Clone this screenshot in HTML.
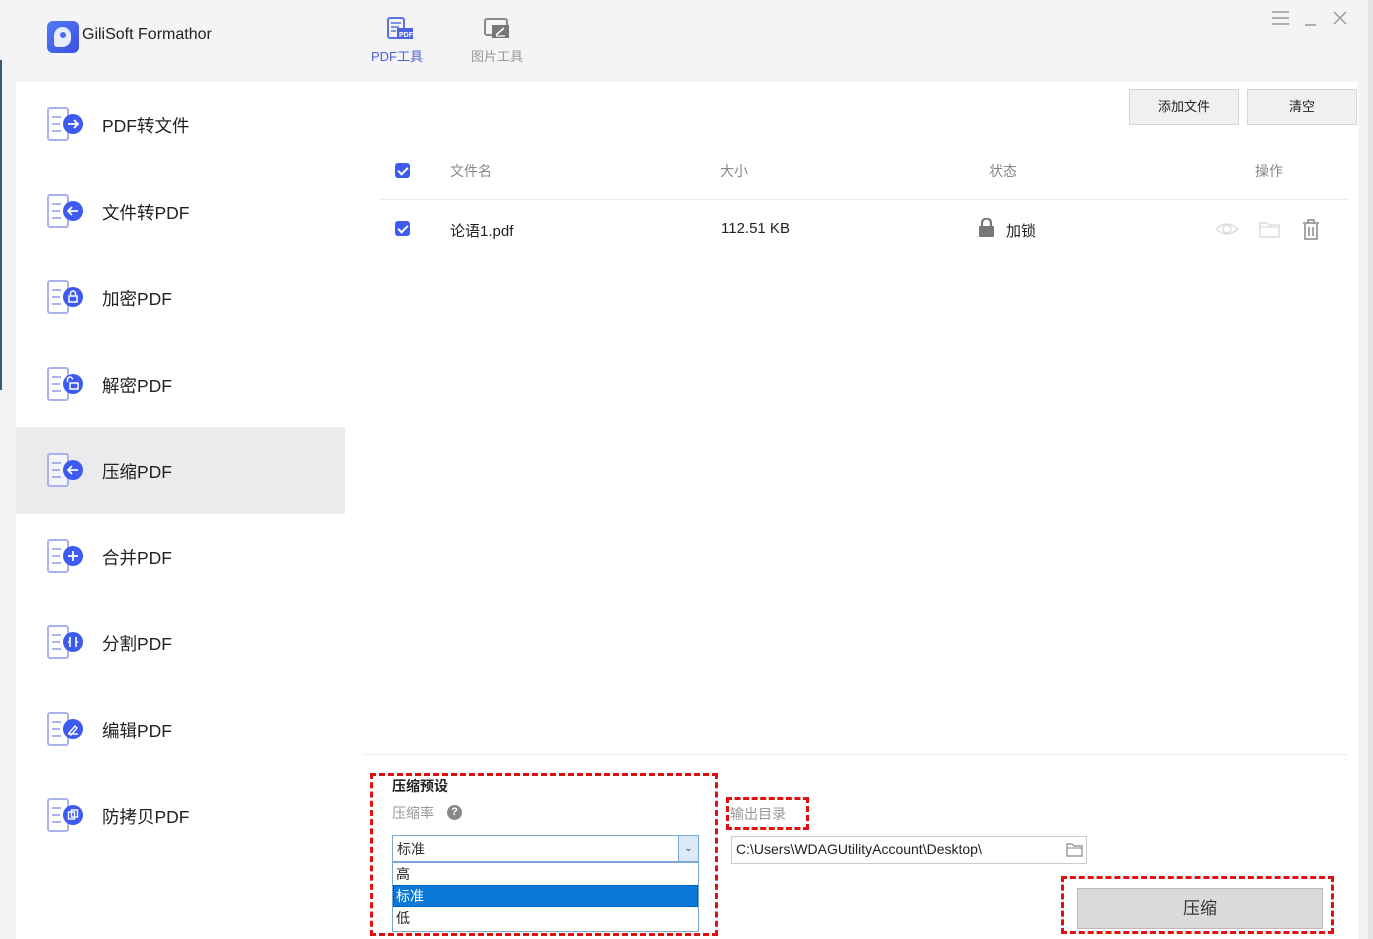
<!DOCTYPE html>
<html><head><meta charset="utf-8"><style>
*{margin:0;padding:0;box-sizing:border-box}
body{width:1373px;height:939px;overflow:hidden;background:#f4f4f6;font-family:"Liberation Sans","Noto Sans CJK SC",sans-serif;position:relative;color:#222}
.a{position:absolute}
.side{left:16px;top:82px;width:1342px;height:857px;background:#fff}
.item{position:absolute;left:16px;width:329px;height:87px}
.item svg{position:absolute;left:31px;top:26px}
.item span{position:absolute;left:86px;top:32px;font-size:17.5px;color:#222}
.hdr{font-size:14px;color:#888}
.cb{width:15px;height:15px;background:#3d5af1;border-radius:3px}
.cb:after{content:"";position:absolute;left:5px;top:2px;width:4px;height:8px;border:solid #fff;border-width:0 2px 2px 0;transform:rotate(45deg)}
.btn{background:#f0f0f0;border:1px solid #d6d6d6;font-size:13px;text-align:center;line-height:34px}
.dash{border:3px dashed #e01010}
</style></head><body>
<div class="a" style="left:0;top:60px;width:2px;height:330px;background:#3a5a7a"></div>
<div class="a" style="left:47px;top:21px;width:32px;height:32px;border-radius:6px;background:linear-gradient(135deg,#4f7cf5,#3d4fe0)"></div>
<div class="a" style="left:54px;top:27px;width:17px;height:20px;border-radius:9px 9px 9px 3px;background:#e8eefc"></div>
<div class="a" style="left:60px;top:32px;width:6px;height:6px;border-radius:50%;background:#4a6cf0"></div>
<div class="a" style="left:82px;top:26px;font-size:16px;color:#222">GiliSoft Formathor</div>
<svg class="a" style="left:386px;top:17px" width="28" height="24"><rect x="2" y="1" width="16" height="20" rx="2" fill="none" stroke="#5a73e8" stroke-width="2"/><path d="M5 6h10M5 10h8M5 14h5" stroke="#5a73e8" stroke-width="1.5"/><rect x="11" y="11" width="16" height="11" fill="#4a62e6"/><text x="13" y="20" font-size="7" fill="#fff" font-family="Liberation Sans" font-weight="bold">PDF</text></svg>
<div class="a" style="left:371px;top:46px;font-size:13px;color:#4a62d8">PDF工具</div>
<svg class="a" style="left:484px;top:17px" width="28" height="24"><rect x="1" y="2" width="22" height="16" rx="2" fill="none" stroke="#888" stroke-width="2"/><rect x="8" y="8" width="17" height="13" fill="#777"/><path d="M12 18l8-7" stroke="#fff" stroke-width="1.5"/><path d="M12 19h9" stroke="#fff" stroke-width="1.2"/></svg>
<div class="a" style="left:471px;top:46px;font-size:13px;color:#999">图片工具</div>
<svg class="a" style="left:1270px;top:9px" width="80" height="20"><path d="M2 3h17M2 9h17M2 15h17" stroke="#999" stroke-width="1.5"/><path d="M35 16h11" stroke="#999" stroke-width="1.5"/><path d="M64 3l12 12M76 3L64 15" stroke="#999" stroke-width="1.5"/></svg>
<div class="a side"></div>
<div class="a" style="left:16px;top:427px;width:329px;height:87px;background:#ebebee"></div>
<div class="a" style="left:1368px;top:0;width:5px;height:939px;background:#e4e4e6"></div>
<div class="item" style="top:81px"><svg width="40" height="36"><rect x="1" y="1" width="20" height="32" rx="2" fill="#fff" stroke="#a9b1ef" stroke-width="2"/><path d="M5 10h9M5 17h8M5 24h9" stroke="#8d97e8" stroke-width="1.5"/><circle cx="26" cy="17" r="10" fill="#3d5af1"/><path d="M21 17h10M27 13l4 4-4 4" stroke="#fff" stroke-width="1.8" fill="none"/></svg><span>PDF转文件</span></div>
<div class="item" style="top:168px"><svg width="40" height="36"><rect x="1" y="1" width="20" height="32" rx="2" fill="#fff" stroke="#a9b1ef" stroke-width="2"/><path d="M5 10h9M5 17h8M5 24h9" stroke="#8d97e8" stroke-width="1.5"/><circle cx="26" cy="17" r="10" fill="#3d5af1"/><path d="M21 17h10M25 13l-4 4 4 4" stroke="#fff" stroke-width="1.8" fill="none"/></svg><span>文件转PDF</span></div>
<div class="item" style="top:254px"><svg width="40" height="36"><rect x="1" y="1" width="20" height="32" rx="2" fill="#fff" stroke="#a9b1ef" stroke-width="2"/><path d="M5 10h9M5 17h8M5 24h9" stroke="#8d97e8" stroke-width="1.5"/><circle cx="26" cy="17" r="10" fill="#3d5af1"/><rect x="22" y="16" width="8" height="6" fill="none" stroke="#fff" stroke-width="1.5"/><path d="M23.5 16v-2.5a2.5 2.5 0 0 1 5 0V16" stroke="#fff" stroke-width="1.5" fill="none"/></svg><span>加密PDF</span></div>
<div class="item" style="top:341px"><svg width="40" height="36"><rect x="1" y="1" width="20" height="32" rx="2" fill="#fff" stroke="#a9b1ef" stroke-width="2"/><path d="M5 10h9M5 17h8M5 24h9" stroke="#8d97e8" stroke-width="1.5"/><circle cx="26" cy="17" r="10" fill="#3d5af1"/><rect x="23" y="16" width="8" height="6" fill="none" stroke="#fff" stroke-width="1.5"/><path d="M20.5 15v-2.5a2.5 2.5 0 0 1 5 0" stroke="#fff" stroke-width="1.5" fill="none"/></svg><span>解密PDF</span></div>
<div class="item" style="top:427px"><svg width="40" height="36"><rect x="1" y="1" width="20" height="32" rx="2" fill="#f4f4fb" stroke="#a9b1ef" stroke-width="2"/><path d="M5 10h9M5 17h8M5 24h9" stroke="#8d97e8" stroke-width="1.5"/><circle cx="26" cy="17" r="10" fill="#3d5af1"/><path d="M21 17h10M25 13l-4 4 4 4" stroke="#fff" stroke-width="1.8" fill="none"/></svg><span>压缩PDF</span></div>
<div class="item" style="top:513px"><svg width="40" height="36"><rect x="1" y="1" width="20" height="32" rx="2" fill="#fff" stroke="#a9b1ef" stroke-width="2"/><path d="M5 10h9M5 17h8M5 24h9" stroke="#8d97e8" stroke-width="1.5"/><circle cx="26" cy="17" r="10" fill="#3d5af1"/><path d="M21 17h10M26 12v10" stroke="#fff" stroke-width="1.8"/></svg><span>合并PDF</span></div>
<div class="item" style="top:599px"><svg width="40" height="36"><rect x="1" y="1" width="20" height="32" rx="2" fill="#fff" stroke="#a9b1ef" stroke-width="2"/><path d="M5 10h9M5 17h8M5 24h9" stroke="#8d97e8" stroke-width="1.5"/><circle cx="26" cy="17" r="10" fill="#3d5af1"/><path d="M23 12v10M29 12v10M21 17h2M29 17h2" stroke="#fff" stroke-width="1.6"/></svg><span>分割PDF</span></div>
<div class="item" style="top:686px"><svg width="40" height="36"><rect x="1" y="1" width="20" height="32" rx="2" fill="#fff" stroke="#a9b1ef" stroke-width="2"/><path d="M5 10h9M5 17h8M5 24h9" stroke="#8d97e8" stroke-width="1.5"/><circle cx="26" cy="17" r="10" fill="#3d5af1"/><path d="M22 21l6-7 2 2-6 7zM21 22h10" stroke="#fff" stroke-width="1.4" fill="none"/></svg><span>编辑PDF</span></div>
<div class="item" style="top:772px"><svg width="40" height="36"><rect x="1" y="1" width="20" height="32" rx="2" fill="#fff" stroke="#a9b1ef" stroke-width="2"/><path d="M5 10h9M5 17h8M5 24h9" stroke="#8d97e8" stroke-width="1.5"/><circle cx="26" cy="17" r="10" fill="#3d5af1"/><rect x="21.5" y="14" width="6" height="7" fill="none" stroke="#fff" stroke-width="1.4"/><rect x="24.5" y="12" width="6" height="7" fill="none" stroke="#fff" stroke-width="1.4"/></svg><span>防拷贝PDF</span></div>
<div class="a btn" style="left:1129px;top:89px;width:110px;height:36px">添加文件</div>
<div class="a btn" style="left:1247px;top:89px;width:110px;height:36px">清空</div>
<div class="a cb" style="left:395px;top:163px"></div>
<div class="a hdr" style="left:450px;top:161px">文件名</div>
<div class="a hdr" style="left:720px;top:161px">大小</div>
<div class="a hdr" style="left:989px;top:161px">状态</div>
<div class="a hdr" style="left:1255px;top:161px">操作</div>
<div class="a" style="left:380px;top:199px;width:968px;height:1px;background:#eee"></div>
<div class="a cb" style="left:395px;top:221px"></div>
<div class="a" style="left:450px;top:220px;font-size:15px">论语1.pdf</div>
<div class="a" style="left:721px;top:220px;font-size:15px">112.51 KB</div>
<svg class="a" style="left:978px;top:218px" width="18" height="20"><rect x="1" y="8" width="15" height="11" rx="1" fill="#777"/><path d="M4 8V5a4.5 4.5 0 0 1 9 0v3" stroke="#777" stroke-width="2.2" fill="none"/></svg>
<div class="a" style="left:1006px;top:220px;font-size:15px">加锁</div>
<svg class="a" style="left:1214px;top:218px" width="110" height="24"><path d="M2 11q11-10 22 0q-11 10-22 0z" fill="none" stroke="#ddd" stroke-width="1.5"/><circle cx="13" cy="11" r="4" fill="none" stroke="#ddd" stroke-width="1.5"/><path d="M46 5h7l2 2h10v12H46z" fill="none" stroke="#ddd" stroke-width="1.5"/><path d="M46 9h19" stroke="#ddd" stroke-width="1.2"/><path d="M89 5h16M94 5V2h6v3M91 6v15h12V6M95 9v9M99 9v9" fill="none" stroke="#888" stroke-width="1.5"/></svg>
<div class="a" style="left:363px;top:754px;width:985px;height:1px;background:#eee"></div>
<div class="a dash" style="left:370px;top:773px;width:348px;height:163px"></div>
<div class="a" style="left:392px;top:776px;font-size:14px;font-weight:bold;color:#222">压缩预设</div>
<div class="a" style="left:392px;top:803px;font-size:14px;color:#999">压缩率</div>
<div class="a" style="left:447px;top:805px;width:15px;height:15px;border-radius:50%;background:#888;color:#fff;font-size:11px;font-weight:bold;text-align:center;line-height:15px">?</div>
<div class="a" style="left:392px;top:835px;width:307px;height:27px;border:1px solid #7aa7d6;background:#fff"></div>
<div class="a" style="left:397px;top:839px;font-size:14px;color:#333">标准</div>
<div class="a" style="left:678px;top:836px;width:20px;height:25px;background:#dce9f7;border-left:1px solid #7aa7d6;font-size:10px;text-align:center;line-height:25px;color:#444">⌄</div>
<div class="a" style="left:392px;top:862px;width:307px;height:70px;border:1px solid #7aa7d6;background:#fff"></div>
<div class="a" style="left:396px;top:864px;font-size:14px">高</div>
<div class="a" style="left:393px;top:885px;width:305px;height:22px;background:#0a78d7;border:1px dotted #333"></div>
<div class="a" style="left:396px;top:886px;font-size:14px;color:#fff">标准</div>
<div class="a" style="left:396px;top:908px;font-size:14px">低</div>
<div class="a dash" style="left:726px;top:797px;width:83px;height:33px"></div>
<div class="a" style="left:730px;top:804px;font-size:14px;color:#999">输出目录</div>
<div class="a" style="left:731px;top:836px;width:356px;height:28px;border:1px solid #ccc;background:#fff"></div>
<div class="a" style="left:736px;top:841px;font-size:14px;color:#222">C:\Users\WDAGUtilityAccount\Desktop\</div>
<svg class="a" style="left:1066px;top:842px" width="18" height="16"><path d="M1 2h5l2 2h8v10H1z" fill="none" stroke="#888" stroke-width="1.2"/><path d="M1 6h15" stroke="#888"/></svg>
<div class="a dash" style="left:1061px;top:876px;width:273px;height:58px"></div>
<div class="a" style="left:1077px;top:888px;width:246px;height:41px;background:#dadadd;border:1px solid #bbb;font-size:17px;text-align:center;line-height:40px;color:#333">压缩</div>
</body></html>
